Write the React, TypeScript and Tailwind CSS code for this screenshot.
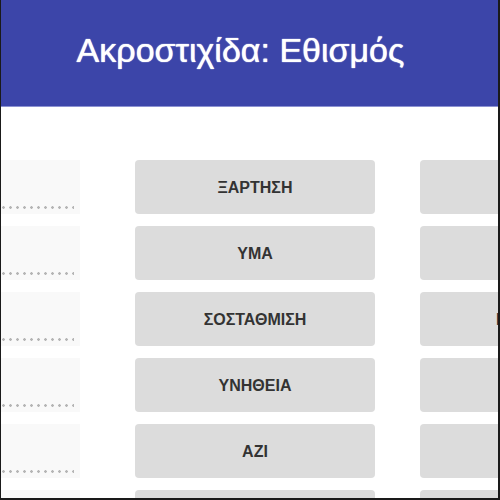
const rows = [
  { word: "ΞΑΡΤΗΣΗ", right: "" },
  { word: "ΥΜΑ", right: "" },
  { word: "ΣΟΣΤΑΘΜΙΣΗ", right: "ΙΣΟΡΡΟΠΙΑ" },
  { word: "ΥΝΗΘΕΙΑ", right: "" },
  { word: "ΑΖΙ", right: "" },
  { word: "", right: "" },
];

export default function App() {
  return (
    <div className="h-[500px] w-[500px] overflow-hidden border-r-2 border-b-2 border-l border-[#1a1a1a] bg-white font-['Liberation_Sans',Arial,sans-serif]">
      <header className="flex h-[107px] items-center justify-center border-b border-[#8c92d2] bg-[#3c45a9] pr-[18px] pb-[6px]">
        <h1 className="text-[34px] text-white [text-shadow:0_0_1px_rgba(255,255,255,0.9),0_0_1px_rgba(255,255,255,0.6)]">
          Ακροστιχίδα: Εθισμός
        </h1>
      </header>
      <main className="flex flex-col gap-[12px] pt-[53px]">
        {rows.map((r, i) => (
          <div key={i} className="flex h-[54px] shrink-0">
            <div className="ml-[-162px] flex w-[241px] shrink-0 items-end bg-[#f9f9f9] pr-[6px] pb-[5px]">
              <div className="h-[3px] w-full bg-[radial-gradient(circle,#b5b5b5_1px,transparent_1.6px)] bg-[length:7px_3px] bg-repeat-x" />
            </div>
            <button className="ml-[55px] flex w-[240px] shrink-0 items-center justify-center rounded-[4px] bg-[#dcdcdc] pt-[2px] text-[16px] font-bold text-[#333]">
              {r.word}
            </button>
            <button className="ml-[45px] flex w-[240px] shrink-0 items-center justify-center rounded-[4px] bg-[#dcdcdc] pt-[2px] text-[16px] font-bold text-[#333]">
              {r.right}
            </button>
          </div>
        ))}
      </main>
    </div>
  );
}
